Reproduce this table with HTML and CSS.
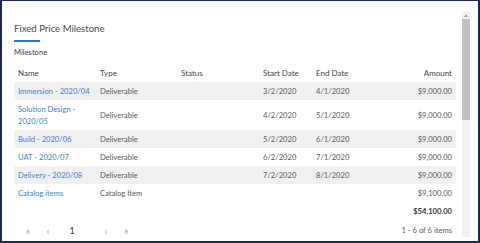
FILE: index.html
```html
<!DOCTYPE html>
<html lang="en">
<head>
    <meta charset="UTF-8">
    <meta name="viewport" content="width=device-width, initial-scale=1.0">
    <title>Fixed Price Milestone</title>
    <link rel="stylesheet" href="styles.css">
</head>
<body>
    <div class="frame">
        <div class="content">
            <h1 class="title">Fixed Price Milestone</h1>
            <div class="title-bar"></div>
            <p class="subtitle">Milestone</p>

            <table class="grid">
                <colgroup>
                    <col class="c-name">
                    <col class="c-type">
                    <col class="c-status">
                    <col class="c-start">
                    <col class="c-end">
                    <col>
                </colgroup>
                <thead>
                    <tr>
                        <th>Name</th>
                        <th>Type</th>
                        <th>Status</th>
                        <th>Start Date</th>
                        <th>End Date</th>
                        <th class="num">Amount</th>
                    </tr>
                </thead>
                <tbody>
                    <tr class="alt">
                        <td><a href="#">Immersion - 2020/04</a></td>
                        <td>Deliverable</td>
                        <td></td>
                        <td>3/2/2020</td>
                        <td>4/1/2020</td>
                        <td class="num">$9,000.00</td>
                    </tr>
                    <tr>
                        <td><a href="#">Solution Design - 2020/05</a></td>
                        <td>Deliverable</td>
                        <td></td>
                        <td>4/2/2020</td>
                        <td>5/1/2020</td>
                        <td class="num">$9,000.00</td>
                    </tr>
                    <tr class="alt">
                        <td><a href="#">Build - 2020/06</a></td>
                        <td>Deliverable</td>
                        <td></td>
                        <td>5/2/2020</td>
                        <td>6/1/2020</td>
                        <td class="num">$9,000.00</td>
                    </tr>
                    <tr>
                        <td><a href="#">UAT - 2020/07</a></td>
                        <td>Deliverable</td>
                        <td></td>
                        <td>6/2/2020</td>
                        <td>7/1/2020</td>
                        <td class="num">$9,000.00</td>
                    </tr>
                    <tr class="alt">
                        <td><a href="#">Delivery - 2020/08</a></td>
                        <td>Deliverable</td>
                        <td></td>
                        <td>7/2/2020</td>
                        <td>8/1/2020</td>
                        <td class="num">$9,000.00</td>
                    </tr>
                    <tr>
                        <td><a href="#">Catalog items</a></td>
                        <td>Catalog Item</td>
                        <td></td>
                        <td></td>
                        <td></td>
                        <td class="num">$9,100.00</td>
                    </tr>
                </tbody>
                <tfoot>
                    <tr>
                        <td colspan="5"></td>
                        <td class="num total">$54,100.00</td>
                    </tr>
                </tfoot>
            </table>

            <div class="pager">
                <span class="pg-btn">&laquo;</span>
                <span class="pg-btn">&lsaquo;</span>
                <span class="pg-num">1</span>
                <span class="pg-btn next">&rsaquo;</span>
                <span class="pg-btn">&raquo;</span>
                <span class="pg-info">1 - 6 of 6 items</span>
            </div>
        </div>

        <div class="scrollbar">
            <div class="sb-arrow"></div>
            <div class="sb-thumb"></div>
        </div>
    </div>
</body>
</html>
```

FILE: styles.css
```css
* {
    margin: 0;
    padding: 0;
    box-sizing: border-box;
}
body {
    font-family: Lato, "Open Sans", Arial, sans-serif;
    background-color: #fff;
    color: #5a5a5a;
}
.frame {
    width: 480px;
    height: 243px;
    border: 2px solid #1b2857;
    border-top-width: 1px;
    display: flex;
    overflow: hidden;
}
.content {
    flex: 1;
    padding: 22px 6px 0 12px;
}
.title {
    font-size: 9.6px;
    font-weight: 400;
    line-height: 12px;
    color: #4a4a4a;
}
.title-bar {
    width: 26px;
    height: 2px;
    margin-top: 5px;
    background-color: #2a78c6;
}
.subtitle {
    font-size: 7.6px;
    line-height: 10px;
    margin-top: 5px;
    color: #444;
}
.grid {
    width: 100%;
    margin-top: 7px;
    border-collapse: collapse;
    table-layout: fixed;
    font-size: 7.6px;
}
.c-name { width: 82px; }
.c-type { width: 81px; }
.c-status { width: 82px; }
.c-start { width: 53px; }
.c-end { width: 66px; }
.grid th {
    font-weight: 400;
    font-size: 8px;
    text-align: left;
    color: #444;
    height: 18px;
    padding: 0 4px;
}
.grid td {
    height: 18px;
    padding: 3px 4px;
    line-height: 12px;
    vertical-align: middle;
}
.grid .num {
    text-align: right;
}
.grid tr.alt td {
    background-color: #f0f0f0;
}
.grid a {
    color: #3a7fd4;
    text-decoration: none;
}
.grid .total {
    font-weight: 700;
    color: #3a3a3a;
}
.pager {
    display: flex;
    align-items: center;
    height: 18px;
    margin-top: 1px;
    padding-left: 4px;
    font-size: 7.6px;
}
.pg-btn {
    width: 20px;
    text-align: center;
    color: #a8a8a8;
    font-size: 11px;
}
.pg-num {
    width: 28px;
    text-align: center;
    color: #333;
    font-size: 9px;
}
.pg-btn.next {
    margin-left: 10px;
}
.pg-info {
    margin-left: auto;
    padding-right: 4px;
}
.scrollbar {
    width: 8px;
    margin: 11px 8px 4px 0;
    background-color: #f1f1f1;
    display: flex;
    flex-direction: column;
}
.sb-arrow {
    height: 7px;
    position: relative;
}
.sb-arrow::after {
    content: "";
    position: absolute;
    left: 2px;
    top: 2px;
    border-left: 2px solid transparent;
    border-right: 2px solid transparent;
    border-bottom: 3px solid #a3a3a3;
}
.sb-thumb {
    height: 101px;
    background-color: #c1c1c1;
}
```
